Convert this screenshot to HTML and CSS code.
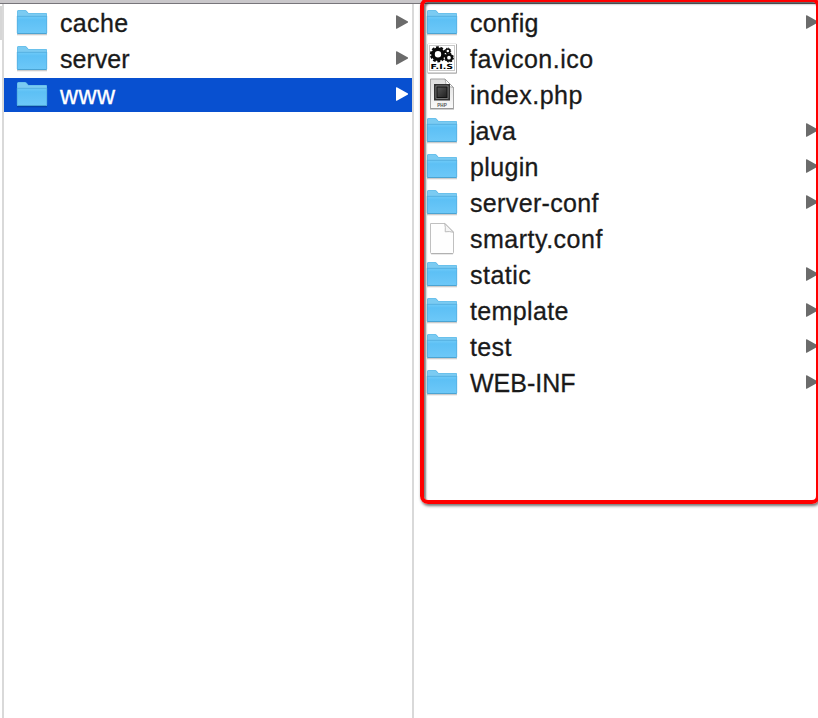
FILE: index.html
```html
<!DOCTYPE html>
<html lang="en">
<head>
<meta charset="utf-8">
<title>www</title>
<link rel="stylesheet" href="styles.css">
</head>
<body>
<svg class="defs" width="0" height="0" aria-hidden="true">
  <defs>
    <linearGradient id="front" x1="0" y1="0" x2="0" y2="1"><stop offset="0" stop-color="#6ecaf8"/><stop offset=".2" stop-color="#5dc0f5"/><stop offset="1" stop-color="#6dc8f8"/></linearGradient>
    <linearGradient id="paper" x1="0" y1="0" x2="0" y2="1"><stop offset="0" stop-color="#dedede"/><stop offset="1" stop-color="#fafafa"/></linearGradient>
    <linearGradient id="chip" x1="0" y1="0" x2="1" y2="1"><stop offset="0" stop-color="#555"/><stop offset="1" stop-color="#222"/></linearGradient>
    <symbol id="folder" viewBox="0 0 32 34">
      <path d="M1 28.500h30" stroke="#000" stroke-opacity=".2" stroke-width="1.600"/>
      <path d="M1 27V5.500q0-1.500 1.500-1.500h6.500q1 0 1.600.8L12.500 7H30q1 0 1 1V27q0 1-1 1H2q-1 0-1-1z" fill="#5ab6e6"/>
      <path d="M1.500 10V5.800q0-1.300 1.300-1.300h6q.8 0 1.300.7L12.200 7.600H30.500V10z" fill="#7bcbf2"/>
      <path d="M1 10.500h30V27q0 .6-.6.6H1.600Q1 27.600 1 27z" fill="url(#front)"/>
      <path d="M1 10.300h30M1.300 10v17M30.700 10v17" stroke="#55afdf" stroke-width=".8" fill="none"/>
      <path d="M1.500 27.500h29" stroke="#4ba4d3"/>
    </symbol>
    <symbol id="gears" viewBox="0 0 32 34">
      <rect x="1.500" y="1.800" width="29.500" height="30" rx="1" fill="#aaa"/>
      <rect x="2" y="2" width="28" height="28.500" fill="#fff"/>
      <rect x="3.500" y="3.500" width="25" height="25" fill="none" stroke="#c8c8c8"/>
      <g fill="none" stroke="#080808">
        <circle cx="12" cy="12.300" r="5" stroke-width="3.600"/>
        <circle cx="12" cy="12.300" r="7.100" stroke-width="2" stroke-dasharray="2.800 1.661"/>
        <circle cx="21.800" cy="9" r="2" stroke-width="1.500"/>
        <circle cx="21.800" cy="9" r="2.900" stroke-width="1" stroke-dasharray="1.278 .999"/>
        <circle cx="23" cy="15.700" r="3" stroke-width="2.300"/>
        <circle cx="23" cy="15.700" r="4.300" stroke-width="1.200" stroke-dasharray="1.777 1.600"/>
      </g>
      <text x="4.500" y="27.200" class="fis" textLength="22.500" lengthAdjust="spacingAndGlyphs">F.I.S</text>
    </symbol>
    <symbol id="php" viewBox="0 0 32 34">
      <path d="M4.500 1H19L27.500 9.500v21h-23z" fill="url(#paper)" stroke="#9b9b9b" stroke-width=".9"/>
      <path d="M4 31h24" stroke="#888" stroke-width=".8"/>
      <path d="M19 1q1.500 4 .6 7.900 4-.8 7.900.6z" fill="#fff" stroke="#999" stroke-width=".8"/>
      <rect x="8" y="6" width="16" height="16.500" fill="#333"/>
      <rect x="10" y="8" width="12" height="12.500" fill="#111" stroke="#999" stroke-width=".7"/>
      <rect x="11.500" y="9.500" width="9" height="9.500" fill="url(#chip)"/>
      <text x="11.300" y="28.500" class="php" textLength="9.500" lengthAdjust="spacingAndGlyphs">PHP</text>
    </symbol>
    <symbol id="file" viewBox="0 0 32 34">
      <path d="M4.500 1.500H19L27.500 10v20.500q0 1-1 1h-21q-1 0-1-1z" fill="#fefefe" stroke="#b9b9b9" stroke-width=".9"/>
      <path d="M5 31.800h22" stroke="#a5a5a5" stroke-width=".8"/>
      <path d="M18.700 1.500q1 4 .5 8.300 4-.7 8.300.5z" fill="#f5f5f5" stroke="#b5b5b5" stroke-width=".9"/>
    </symbol>
    <symbol id="arrow" viewBox="0 0 12 14"><path d="M0 .8Q0 0 .8.200L12 6.600v.8L.8 13.800Q0 14 0 13.200z" fill="currentColor"/></symbol>
  </defs>
</svg>
<div class="window">
  <div class="topbar"></div>
  <div class="browser">
    <div class="previous"><div class="thumb"></div></div>
    <ul class="column parent">
      <li><svg class="icon"><use href="#folder"/></svg><span>cache</span><svg class="arrow"><use href="#arrow"/></svg></li>
      <li><svg class="icon"><use href="#folder"/></svg><span class="tight">server</span><svg class="arrow"><use href="#arrow"/></svg></li>
      <li class="selected"><svg class="icon"><use href="#folder"/></svg><span class="wide">www</span><svg class="arrow"><use href="#arrow"/></svg></li>
    </ul>
    <ul class="column child">
      <li><svg class="icon"><use href="#folder"/></svg><span>config</span><svg class="arrow"><use href="#arrow"/></svg></li>
      <li><svg class="icon"><use href="#gears"/></svg><span class="wide">favicon.ico</span></li>
      <li><svg class="icon"><use href="#php"/></svg><span class="wide">index.php</span></li>
      <li><svg class="icon"><use href="#folder"/></svg><span class="tight">java</span><svg class="arrow"><use href="#arrow"/></svg></li>
      <li><svg class="icon"><use href="#folder"/></svg><span>plugin</span><svg class="arrow"><use href="#arrow"/></svg></li>
      <li><svg class="icon"><use href="#folder"/></svg><span>server-conf</span><svg class="arrow"><use href="#arrow"/></svg></li>
      <li><svg class="icon"><use href="#file"/></svg><span class="wide">smarty.conf</span></li>
      <li><svg class="icon"><use href="#folder"/></svg><span class="wide">static</span><svg class="arrow"><use href="#arrow"/></svg></li>
      <li><svg class="icon"><use href="#folder"/></svg><span>template</span><svg class="arrow"><use href="#arrow"/></svg></li>
      <li><svg class="icon"><use href="#folder"/></svg><span>test</span><svg class="arrow"><use href="#arrow"/></svg></li>
      <li><svg class="icon"><use href="#folder"/></svg><span class="caps">WEB-INF</span><svg class="arrow"><use href="#arrow"/></svg></li>
    </ul>
  </div>
  <div class="highlight"></div>
</div>
</body>
</html>
```
FILE: styles.css
```css
* { box-sizing: border-box; }
body { margin: 0; background: #fff; font-family: "Liberation Sans", Arial, sans-serif; }
.defs { position: absolute; }
.window { position: relative; height: 718px; overflow: hidden; display: flex; flex-direction: column; }
.topbar { flex: none; height: 4px; background: #c9c7ca; border-bottom: 1px solid #77757a; }
.browser { flex: 1; display: grid; grid-template-columns: 4px 410px 1fr; }
.previous { border-right: 2px solid #d9d9d9; padding-top: 2px; }
.thumb { height: 34px; background: #d6d6d6; }
.column { margin: 0; padding: 2px 0 0; list-style: none; display: flex; flex-direction: column; gap: 2px; }
.parent { border-right: 2px solid #d9d9d9; }
.column li { height: 34px; display: flex; align-items: center; padding: 0 4px 0 12px; color: #1a1a1a; }
.child li { padding-right: 0; }
.icon { flex: none; width: 32px; height: 34px; }
.column span { flex: 1; margin-left: 12px; font-size: 25px; line-height: 34px; letter-spacing: 0.35px; height: 34px; -webkit-text-stroke: 0.3px currentColor; }
.column span.wide { letter-spacing: 0.5px; }
.column span.tight { letter-spacing: 0; }
.column span.caps { letter-spacing: 0; }
.arrow { flex: none; width: 12px; height: 14px; margin-bottom: 2px; color: #6b6b6b; }
.column .selected { background: #0850d0; color: #fff; }
.selected .arrow { color: #fff; }
.highlight { position: absolute; left: 420px; top: -2px; width: 400px; height: 506px; border: 4px solid #f00; border-radius: 8px; box-shadow: 1px 2px 3px rgba(0,0,0,.55), inset 2px 2px 2px rgba(0,0,0,.5); }
.fis { font: bold 7px "DejaVu Sans", sans-serif; fill: #000; }
.php { font: bold 4.5px "Liberation Sans", sans-serif; fill: #555; }
```
